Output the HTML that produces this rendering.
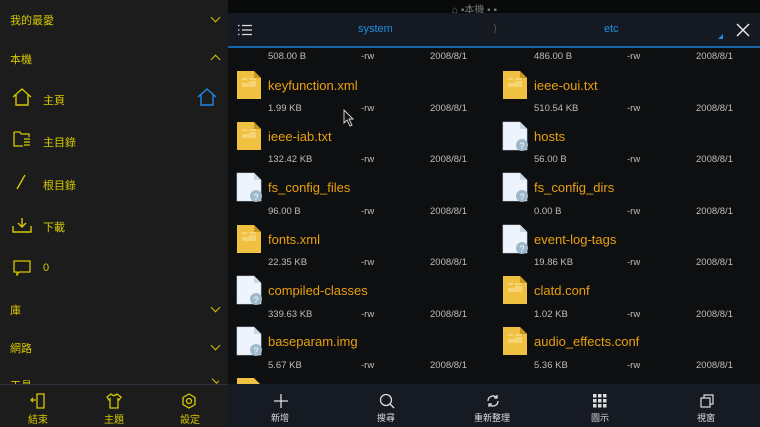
<!DOCTYPE html>
<html><head><meta charset="utf-8"><style>
*{margin:0;padding:0;box-sizing:border-box}
body{width:760px;height:427px;overflow:hidden;background:#0e0f10;font-family:"Liberation Sans","Noto Sans CJK TC",sans-serif;position:relative}
.a{position:absolute;white-space:nowrap}
#left{position:absolute;left:0;top:0;width:228px;height:427px;background:#1c1c1c}
.y{color:#d6c800;font-size:11px}
.chev{position:absolute;width:7px;height:7px;border-right:1.6px solid #d6c800;border-bottom:1.6px solid #d6c800}
.nm{color:#e8a010;font-size:13px}
.inf{color:#bdbdbd;font-size:9.5px}
.w{color:#ddd;font-size:9px}
</style></head><body>
<div id="left">
<div class="a y" style="left:10px;top:12px">我的最愛</div>
<div class="chev" style="left:212px;top:14px;transform:rotate(45deg)"></div>
<div class="a y" style="left:10px;top:51px">本機</div>
<div class="chev" style="left:212px;top:56px;transform:rotate(-135deg)"></div>
<svg class="a" style="left:12px;top:88px" width="20" height="18" viewBox="0 0 20 18" fill="none" stroke="#d6c800" stroke-width="1.4"><path d="M1 9 L10 1 L19 9 M4 7 V17 H16 V7"/></svg>
<div class="a y" style="left:43px;top:92px">主頁</div>
<svg class="a" style="left:197px;top:88px" width="20" height="18" viewBox="0 0 20 18" fill="none" stroke="#1e88e5" stroke-width="1.4"><path d="M1 9 L10 1 L19 9 M4 7 V17 H16 V7"/></svg>
<svg class="a" style="left:13px;top:131px" width="18" height="16" viewBox="0 0 18 16" fill="none" stroke="#d6c800" stroke-width="1.3"><path d="M1 1 H7 L8 3 H16 V6 M1 1 V15 H10 M11 8 H17 M11 11 H17 M11 14 H17"/></svg>
<div class="a y" style="left:43px;top:134px">主目錄</div>
<svg class="a" style="left:14px;top:174px" width="14" height="16"><path d="M11 1 L3 15" stroke="#d6c800" stroke-width="1.4"/></svg>
<div class="a y" style="left:43px;top:177px">根目錄</div>
<svg class="a" style="left:12px;top:217px" width="20" height="16" viewBox="0 0 20 16" fill="none" stroke="#d6c800" stroke-width="1.4"><path d="M10 1 V10 M6 6 L10 10 L14 6 M1 9 V15 H19 V9"/></svg>
<div class="a y" style="left:43px;top:219px">下載</div>
<svg class="a" style="left:13px;top:260px" width="18" height="16" viewBox="0 0 18 16" fill="none" stroke="#d6c800" stroke-width="1.3"><path d="M1 1 H17 V12 H6 L4 15 V12 H1 Z"/></svg>
<div class="a y" style="left:43px;top:262px">0</div>
<div class="a y" style="left:10px;top:302px">庫</div>
<div class="chev" style="left:212px;top:304px;transform:rotate(45deg)"></div>
<div class="a y" style="left:10px;top:340px">網路</div>
<div class="chev" style="left:212px;top:342px;transform:rotate(45deg)"></div>
<div class="a y" style="left:10px;top:377px;height:7px;overflow:hidden">工具</div>
<div class="chev" style="left:212px;top:378px;transform:rotate(45deg);height:4px"></div>
<div class="a" style="left:0;top:384px;width:228px;height:43px;background:#1c1c1c;border-top:1px solid #2c3440"></div>
<svg class="a" style="left:30px;top:393px" width="16" height="16" viewBox="0 0 16 16" fill="none" stroke="#d6c800" stroke-width="1.3"><path d="M7 1 H14 V15 H7 Z M1 7 H6 M3 5 L1 7 L3 9"/></svg>
<div class="a y" style="left:28px;top:411px;font-size:10px">結束</div>
<svg class="a" style="left:106px;top:393px" width="16" height="16" viewBox="0 0 16 16" fill="none" stroke="#d6c800" stroke-width="1.3"><path d="M5 1 L1 4 L3 7 L4 6 V15 H12 V6 L13 7 L15 4 L11 1 Q8 4 5 1 Z"/></svg>
<div class="a y" style="left:104px;top:411px;font-size:10px">主題</div>
<svg class="a" style="left:181px;top:393px" width="16" height="16" viewBox="0 0 16 16" fill="none" stroke="#d6c800" stroke-width="1.3"><path d="M8 1 L14 4.5 V11.5 L8 15 L2 11.5 V4.5 Z"/><circle cx="8" cy="8" r="2.5"/></svg>
<div class="a y" style="left:180px;top:411px;font-size:10px">設定</div>
</div>

<div class="a" style="left:228px;top:0;width:532px;height:13px;background:#080909"></div>
<div class="a" style="left:452px;top:1px;color:#777;font-size:10px">⌂ ▪本機 ▪ ▪</div>
<div class="a" style="left:228px;top:13px;width:532px;height:33px;background:#151a22"></div>
<div class="a" style="left:228px;top:46px;width:532px;height:2px;background:#1565a8"></div>
<svg class="a" style="left:238px;top:24px" width="14" height="12"><g stroke="#ddd" stroke-width="1.3"><path d="M0 1.5H1.5M0 6H1.5M0 10.5H1.5M4 1.5H14M4 6H14M4 10.5H14"/></g></svg>
<div class="a" style="left:358px;top:23px;color:#1e8fe0;font-size:11px">system</div>
<div class="a" style="left:493px;top:22px;color:#555;font-size:11px">⟩</div>
<div class="a" style="left:604px;top:23px;color:#1e8fe0;font-size:11px">etc</div>
<div class="a" style="left:718px;top:34px;width:0;height:0;border-left:5px solid transparent;border-bottom:5px solid #1e8fe0"></div>
<svg class="a" style="left:736px;top:23px" width="14" height="14"><path d="M1 1L13 13M13 1L1 13" stroke="#eee" stroke-width="1.4"/></svg>

<div class="a inf" style="left:268px;top:51px">508.00 B</div><div class="a inf" style="left:361px;top:51px">-rw</div><div class="a inf" style="left:430px;top:51px">2008/8/1</div>
<div class="a inf" style="left:534px;top:51px">486.00 B</div><div class="a inf" style="left:627px;top:51px">-rw</div><div class="a inf" style="left:696px;top:51px">2008/8/1</div>

<svg width="0" height="0" style="position:absolute"><defs>
<g id="txt"><path d="M0 0H17L24 7V28H0Z" fill="#f0c040"/><path d="M17 0L24 7H17Z" fill="#c8981e"/><g stroke="#fff6d0" stroke-width="0.8"><path d="M5 8H10M12 8H19M12 11H19M5 13H19M5 15H19"/></g></g>
<g id="unk"><path d="M0 0H17L24 7V28H0Z" fill="#eef4fb" stroke="#c9d7e6" stroke-width="0.6"/><path d="M17 0L24 7H17Z" fill="#c9d7e6"/><circle cx="19" cy="23" r="6" fill="#9fb8cc"/><text x="19" y="27" font-size="9" fill="#fff" text-anchor="middle" font-family="Liberation Sans">?</text></g>
</defs></svg>

<svg class="a" style="left:0;top:0" width="760" height="427">
<use href="#txt" x="237" y="71"/><use href="#txt" x="503" y="71"/>
<use href="#txt" x="237" y="122"/><use href="#unk" x="503" y="122"/>
<use href="#unk" x="237" y="173"/><use href="#unk" x="503" y="173"/>
<use href="#txt" x="237" y="225"/><use href="#unk" x="503" y="225"/>
<use href="#unk" x="237" y="276"/><use href="#txt" x="503" y="276"/>
<use href="#unk" x="237" y="327"/><use href="#txt" x="503" y="327"/>
<path d="M237 378H254L261 385V384H237Z" fill="#f0c040"/>
<path d="M344 110 L344 123 L347 120 L350 126 L352 125 L349 119 L353 119 Z" fill="#111" stroke="#ddd" stroke-width="0.9"/>
</svg>

<div class="a nm" style="left:268px;top:78px">keyfunction.xml</div>
<div class="a nm" style="left:534px;top:78px">ieee-oui.txt</div>
<div class="a nm" style="left:268px;top:129px">ieee-iab.txt</div>
<div class="a nm" style="left:534px;top:129px">hosts</div>
<div class="a nm" style="left:268px;top:180px">fs_config_files</div>
<div class="a nm" style="left:534px;top:180px">fs_config_dirs</div>
<div class="a nm" style="left:268px;top:232px">fonts.xml</div>
<div class="a nm" style="left:534px;top:232px">event-log-tags</div>
<div class="a nm" style="left:268px;top:283px">compiled-classes</div>
<div class="a nm" style="left:534px;top:283px">clatd.conf</div>
<div class="a nm" style="left:268px;top:334px">baseparam.img</div>
<div class="a nm" style="left:534px;top:334px">audio_effects.conf</div>

<div class="a inf" style="left:268px;top:103px">1.99 KB</div><div class="a inf" style="left:361px;top:103px">-rw</div><div class="a inf" style="left:430px;top:103px">2008/8/1</div>
<div class="a inf" style="left:534px;top:103px">510.54 KB</div><div class="a inf" style="left:627px;top:103px">-rw</div><div class="a inf" style="left:696px;top:103px">2008/8/1</div>
<div class="a inf" style="left:268px;top:154px">132.42 KB</div><div class="a inf" style="left:361px;top:154px">-rw</div><div class="a inf" style="left:430px;top:154px">2008/8/1</div>
<div class="a inf" style="left:534px;top:154px">56.00 B</div><div class="a inf" style="left:627px;top:154px">-rw</div><div class="a inf" style="left:696px;top:154px">2008/8/1</div>
<div class="a inf" style="left:268px;top:206px">96.00 B</div><div class="a inf" style="left:361px;top:206px">-rw</div><div class="a inf" style="left:430px;top:206px">2008/8/1</div>
<div class="a inf" style="left:534px;top:206px">0.00 B</div><div class="a inf" style="left:627px;top:206px">-rw</div><div class="a inf" style="left:696px;top:206px">2008/8/1</div>
<div class="a inf" style="left:268px;top:257px">22.35 KB</div><div class="a inf" style="left:361px;top:257px">-rw</div><div class="a inf" style="left:430px;top:257px">2008/8/1</div>
<div class="a inf" style="left:534px;top:257px">19.86 KB</div><div class="a inf" style="left:627px;top:257px">-rw</div><div class="a inf" style="left:696px;top:257px">2008/8/1</div>
<div class="a inf" style="left:268px;top:309px">339.63 KB</div><div class="a inf" style="left:361px;top:309px">-rw</div><div class="a inf" style="left:430px;top:309px">2008/8/1</div>
<div class="a inf" style="left:534px;top:309px">1.02 KB</div><div class="a inf" style="left:627px;top:309px">-rw</div><div class="a inf" style="left:696px;top:309px">2008/8/1</div>
<div class="a inf" style="left:268px;top:360px">5.67 KB</div><div class="a inf" style="left:361px;top:360px">-rw</div><div class="a inf" style="left:430px;top:360px">2008/8/1</div>
<div class="a inf" style="left:534px;top:360px">5.36 KB</div><div class="a inf" style="left:627px;top:360px">-rw</div><div class="a inf" style="left:696px;top:360px">2008/8/1</div>

<div class="a" style="left:228px;top:384px;width:532px;height:43px;background:#161b23"></div>
<svg class="a" style="left:273px;top:393px" width="16" height="16"><path d="M8 1V15M1 8H15" stroke="#ddd" stroke-width="1.3"/></svg>
<div class="a w" style="left:271px;top:411px">新增</div>
<svg class="a" style="left:379px;top:393px" width="16" height="16" fill="none" stroke="#ddd" stroke-width="1.3"><circle cx="7" cy="7" r="5.5"/><path d="M11 11L15 15"/></svg>
<div class="a w" style="left:377px;top:411px">搜尋</div>
<svg class="a" style="left:486px;top:394px" width="14" height="14" fill="none" stroke="#ddd" stroke-width="1.3"><path d="M2 7A5 5 0 0 1 11 4M12 7A5 5 0 0 1 3 10M11 1V4H8M3 13V10H6"/></svg>
<div class="a w" style="left:474px;top:411px">重新整理</div>
<svg class="a" style="left:593px;top:394px" width="14" height="14" fill="#ddd"><rect x="0" y="0" width="3.5" height="3.5"/><rect x="5" y="0" width="3.5" height="3.5"/><rect x="10" y="0" width="3.5" height="3.5"/><rect x="0" y="5" width="3.5" height="3.5"/><rect x="5" y="5" width="3.5" height="3.5"/><rect x="10" y="5" width="3.5" height="3.5"/><rect x="0" y="10" width="3.5" height="3.5"/><rect x="5" y="10" width="3.5" height="3.5"/><rect x="10" y="10" width="3.5" height="3.5"/></svg>
<div class="a w" style="left:591px;top:411px">圖示</div>
<svg class="a" style="left:700px;top:394px" width="14" height="14" fill="none" stroke="#ddd" stroke-width="1.2"><rect x="1" y="4" width="9" height="9"/><path d="M4 4V1H13V10H10"/></svg>
<div class="a w" style="left:697px;top:411px">視窗</div>
</body></html>
